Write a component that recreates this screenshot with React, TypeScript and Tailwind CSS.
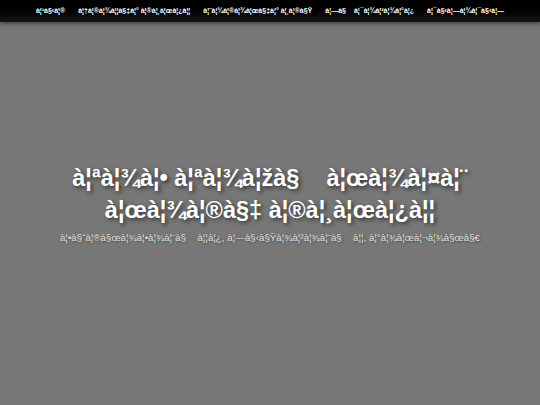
const Gap = () => <span className="inline-block w-[1.15em]">{"\u008D"}</span>;

const navItems = [
  ["à¦¹à§‹à¦®"],
  ["à¦†à¦®à¦¾à¦¦à§‡à¦° à¦®à¦¸à¦œà¦¿à¦¦"],
  ["à¦¨à¦¾à¦®à¦¾à¦œà§‡à¦° à¦¸à¦®à§Ÿ"],
  ["à¦—à§", "à¦¯à¦¾à¦²à¦¾à¦°à¦¿"],
  ["à¦¯à§‹à¦—à¦¾à¦¯à§‹à¦—"],
];

export default function App() {
  return (
    <div className="w-[540px] h-[405px] bg-[#777777] flex flex-col font-['Liberation_Sans',Arial,sans-serif] overflow-hidden">
      <nav className="h-[22px] bg-gradient-to-b from-[#000000] to-[#161616] shadow-[0_2px_4px_rgba(0,0,0,0.45)] flex items-center justify-center gap-[13px]">
        {navItems.map((parts, i) => (
          <a key={i} className="text-white text-[7px] font-bold whitespace-pre antialiased">
            {parts[0]}
            {parts.length > 1 && (
              <>
                <Gap />
                {parts[1]}
              </>
            )}
          </a>
        ))}
      </nav>
      <main className="flex-1 flex flex-col items-center pt-[140px]">
        <h1 className="text-white text-[23.5px] font-bold leading-[32px] text-center whitespace-pre [text-shadow:2px_2px_4px_rgba(0,0,0,0.6)]">
          {"à¦ªà¦¾à¦• à¦ªà¦¾à¦žà§"}
          <Gap />
          {"à¦œà¦¾à¦¤à¦¨"}
          <br />
          {"à¦œà¦¾à¦®à§‡ à¦®à¦¸à¦œà¦¿à¦¦"}
        </h1>
        <p className="mt-[5px] text-[#e0e0e0] text-[9.75px] whitespace-pre [text-shadow:1px_1px_2px_rgba(0,0,0,0.4)]">
          {"à¦•à§ˆà¦®à§œà¦¾à¦•à¦¾à¦¨à§"}
          <Gap />
          {"à¦¦à¦¿, à¦—à§‹à§Ÿà¦¾à¦²à¦¾à¦¨à§"}
          <Gap />
          {"à¦¦, à¦°à¦¾à¦œà¦¬à¦¾à§œà§€"}
        </p>
      </main>
    </div>
  );
}
